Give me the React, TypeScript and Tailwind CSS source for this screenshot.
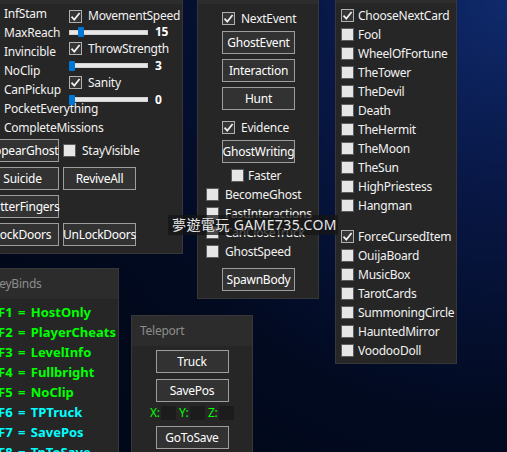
import type { ReactNode } from 'react'

const Check = ({ on }: { on?: boolean }) => (
    <span
        className={`flex h-[13px] w-[13px] shrink-0 items-center justify-center border ${
            on ? 'border-[#b0b0b0] bg-[#353535]' : 'border-[#5c5c5c] bg-[#e6e6e6]'
        }`}
    >
        {on && (
            <svg viewBox="0 0 11 11" className="h-[11px] w-[11px]">
                <path d="M1.5 5.6 4.3 8.6 9.6 2" fill="none" stroke="#f0f0f0" strokeWidth="1.7" />
            </svg>
        )}
    </span>
)

const Toggle = ({
    label,
    on,
    gap = 'gap-[6px]',
    className = ''
}: {
    label: string
    on?: boolean
    gap?: string
    className?: string
}) => (
    <div className={`flex h-[19px] items-center ${gap} ${className}`}>
        <Check on={on} />
        <span className="whitespace-nowrap">{label}</span>
    </div>
)

const Btn = ({ children, className = '' }: { children: ReactNode; className?: string }) => (
    <div
        className={`flex h-[23px] w-[73px] shrink-0 items-center justify-center whitespace-nowrap border border-[#9d9d9d] bg-[#323232] text-white ${className}`}
    >
        {children}
    </div>
)

const Slider = ({ value, at, h }: { value: string; at: string; h: string }) => (
    <div className={`flex items-center ${h}`}>
        <div className="relative h-[5px] w-[79px] border border-[#d2d2d2] bg-[#e7e7e7]">
            <span className={`absolute top-1/2 h-[10px] w-[6px] -translate-y-1/2 rounded-[1px] bg-[#0078d7] ${at}`} />
        </div>
        <span className="ml-[7px] font-bold text-white">{value}</span>
    </div>
)

const Window = ({
    className,
    header,
    children
}: {
    className: string
    header: ReactNode
    children: ReactNode
}) => (
    <section className={`absolute flex flex-col border border-[#373737] bg-[#262626] ${className}`}>
        {header}
        {children}
    </section>
)

const cards = [
    'Fool',
    'WheelOfFortune',
    'TheTower',
    'TheDevil',
    'Death',
    'TheHermit',
    'TheMoon',
    'TheSun',
    'HighPriestess',
    'Hangman'
]

const items = ['OuijaBoard', 'MusicBox', 'TarotCards', 'SummoningCircle', 'HauntedMirror', 'VoodooDoll']

const keys = [
    ['F1', 'HostOnly', 'text-[#00ff00]'],
    ['F2', 'PlayerCheats', 'text-[#00ff00]'],
    ['F3', 'LevelInfo', 'text-[#00ff00]'],
    ['F4', 'Fullbright', 'text-[#00ff00]'],
    ['F5', 'NoClip', 'text-[#00ff00]'],
    ['F6', 'TPTruck', 'text-[#00ffff]'],
    ['F7', 'SavePos', 'text-[#00ffff]'],
    ['F8', 'TpToSave', 'text-[#00ffff]']
]

const App = () => (
    <div className="relative h-[452px] w-[507px] overflow-hidden bg-[radial-gradient(circle_at_100%_0%,#0f2a6c_0%,#081745_28%,#020a20_62%,#010716_100%)] text-[12px] leading-none tracking-[-0.25px] text-[#f2f2f2] [font-family:'Noto_Sans','Noto_Sans_CJK_TC',sans-serif]">
        {/* player */}
        <Window className="left-[-20px] top-[-20px] h-[274px] w-[203px]" header={<div className="h-[23px] bg-[#2d2d2d]" />}>
            <div className="flex">
                <div className="flex w-[88px] flex-col pl-[4px]">
                    {['InfStam', 'MaxReach', 'Invincible', 'NoClip', 'CanPickup', 'PocketEverything', 'CompleteMissions'].map(
                        (label) => (
                            <Toggle key={label} label={label} />
                        )
                    )}
                </div>
                <div className="flex flex-col pt-[4px]">
                    <Toggle label="MovementSpeed" on className="!h-[16px]" />
                    <Slider value="15" at="left-[8px]" h="h-[16px]" />
                    <Toggle label="ThrowStrength" on className="!h-[17px]" />
                    <Slider value="3" at="left-[-1px]" h="h-[17px]" />
                    <Toggle label="Sanity" on className="!h-[17px]" />
                    <Slider value="0" at="left-[-1px]" h="h-[17px]" />
                </div>
            </div>
            <div className="mt-[2px] grid grid-cols-[73px_73px] gap-x-[4px] gap-y-[5px] pl-[5px]">
                <Btn>AppearGhost</Btn>
                <Toggle label="StayVisible" className="!h-[23px]" />
                <Btn>Suicide</Btn>
                <Btn>ReviveAll</Btn>
                <Btn>ButterFingers</Btn>
                <div />
                <Btn>LockDoors</Btn>
                <Btn>UnLockDoors</Btn>
            </div>
        </Window>

        {/* ghost */}
        <Window className="left-[197px] top-[-20px] h-[319px] w-[122px]" header={<div className="h-[23px] bg-[#2d2d2d]" />}>
            <div className="flex flex-col pl-[8px] pt-[5px]">
                <Toggle label="NextEvent" on className="ml-[16px]" />
                <Btn className="ml-[16px] mt-[3px]">GhostEvent</Btn>
                <Btn className="ml-[16px] mt-[5px]">Interaction</Btn>
                <Btn className="ml-[16px] mt-[5px]">Hunt</Btn>
                <Toggle label="Evidence" on className="ml-[16px] mt-[8px]" />
                <Btn className="ml-[16px] mt-[3px]">GhostWriting</Btn>
                <Toggle label="Faster" className="ml-[25px] mt-[3px]" gap="gap-[4px]" />
                <Toggle label="BecomeGhost" />
                <Toggle label="FastInteractions" />
                <Toggle label="CanCloseTruck" />
                <Toggle label="GhostSpeed" />
                <Btn className="ml-[16px] mt-[7px]">SpawnBody</Btn>
            </div>
        </Window>

        {/* cursed items */}
        <Window className="left-[335px] top-[-20px] h-[384px] w-[122px]" header={<div className="h-[22px] bg-[#2d2d2d]" />}>
            <div className="flex flex-col pl-[5px] pt-[3px]">
                <Toggle label="ChooseNextCard" on gap="gap-[4px]" />
                {cards.map((c) => (
                    <Toggle key={c} label={c} gap="gap-[4px]" />
                ))}
                <Toggle label="ForceCursedItem" on gap="gap-[4px]" className="mt-[12px]" />
                {items.map((c) => (
                    <Toggle key={c} label={c} gap="gap-[4px]" />
                ))}
            </div>
        </Window>

        {/* keybinds */}
        <Window
            className="left-[-16px] top-[268px] h-[200px] w-[135px] bg-[#232323]"
            header={
                <div className="flex h-[30px] items-center bg-[#2c2c2c] pl-[7px] text-[#8c8c8c]">KeyBinds</div>
            }
        >
            <div className="flex flex-col pl-[13px] pt-[3px] text-[13px] font-bold tracking-normal [word-spacing:2px]">
                {keys.map(([k, v, color]) => (
                    <div key={k} className={`flex h-[20px] items-center whitespace-pre ${color}`}>
                        {`${k} = ${v}`}
                    </div>
                ))}
            </div>
        </Window>

        {/* teleport */}
        <Window
            className="left-[131px] top-[315px] h-[150px] w-[122px] bg-[#232323]"
            header={
                <div className="flex h-[30px] items-center bg-[#2c2c2c] pl-[8px] text-[#8c8c8c]">Teleport</div>
            }
        >
            <div className="flex flex-col items-center pt-[4px]">
                <Btn>Truck</Btn>
                <Btn className="mt-[6px]">SavePos</Btn>
                <div className="mt-[4px] flex h-[14px] gap-[3px] text-[#00ff00]">
                    {['X:', 'Y:', 'Z:'].map((l) => (
                        <div key={l} className="flex items-center">
                            <span className="w-[11px]">{l}</span>
                            <span className="h-[14px] w-[15px] bg-[#1c1c1c]" />
                        </div>
                    ))}
                </div>
                <Btn className="mt-[6px]">GoToSave</Btn>
            </div>
        </Window>

        {/* watermark */}
        <div className="absolute left-[168px] top-[215px] flex h-[20px] w-[170px] items-center bg-[#151515]/75 pl-[4px] text-[14px] tracking-[0.4px] text-[#e8e8e8]">
            夢遊電玩 GAME735.COM
        </div>
    </div>
)

export default App
